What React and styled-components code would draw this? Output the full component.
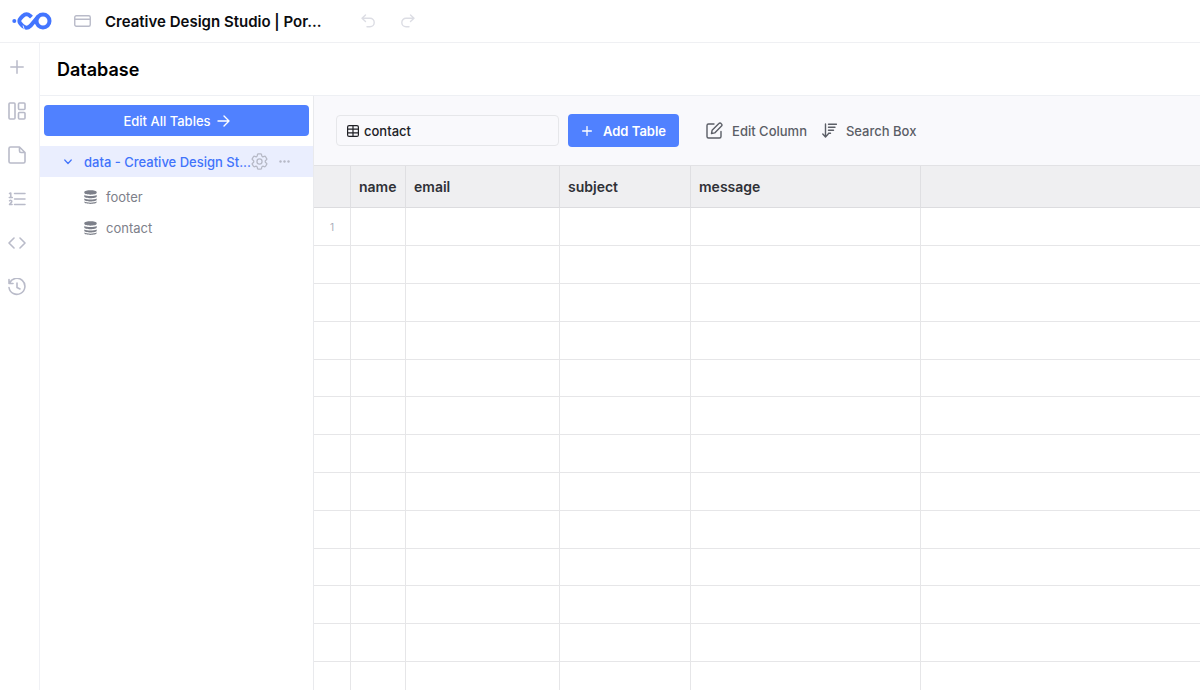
import styled, { createGlobalStyle } from "styled-components";

const columns = [
    { name: "name", width: 55 },
    { name: "email", width: 154 },
    { name: "subject", width: 131 },
    { name: "message", width: 230 },
];

const tables = ["footer", "contact"];
const rows = Array.from({ length: 13 }, (_, i) => i + 1);

const LogoIcon = () => (
    <svg width="40" height="20" viewBox="0 0 40 20" fill="none" stroke="#4375ff" strokeWidth="4">
        <circle cx="2.300" cy="10" r="2" fill="#4375ff" stroke="none" />
        <path d="M19.500 6.200L18.300 5C15.800 2.700 13 2.900 10.800 5L8.300 7.700a3.300 3.300 0 0 0 0 4.600L10.800 15c2.300 2.200 5.200 2.200 7.700-.2L26.300 5.500" />
        <circle cx="31" cy="10" r="6.500" />
        <path d="M11 14.500l1.600 5" stroke="#ffffff" strokeWidth="0.900" />
    </svg>
);

const WindowIcon = () => (
    <Icon width="17" height="12" viewBox="0 0 17 12">
        <rect x="0.750" y="0.750" width="15.500" height="10.500" rx="1.500" />
        <path d="M1 4.300h15" />
    </Icon>
);

const UndoIcon = () => (
    <Icon width="14" height="14" viewBox="0 0 14 14">
        <path d="M4.500 1L1 4.300l3.500 3.200M1.200 4.300H9a4.200 4.200 0 0 1 0 8.400H6" />
    </Icon>
);

const RedoIcon = () => (
    <Icon width="14" height="14" viewBox="0 0 14 14">
        <path d="M9.500 1L13 4.300 9.500 7.500M12.800 4.300H5a4.200 4.200 0 0 0 0 8.400h3" />
    </Icon>
);

const PlusIcon = ({ size }) => (
    <Icon width={size} height={size} viewBox="0 0 14 14" $stroke={size < 12 ? 1.8 : 1.5}>
        <path d="M7 .8v12.400M.8 7h12.400" />
    </Icon>
);

const LayoutIcon = () => (
    <Icon width="18" height="18" viewBox="0 0 18 18" $stroke={1.6}>
        <rect x="1" y="1" width="6" height="16" rx="1" />
        <rect x="10.500" y="1" width="6.500" height="6.500" rx="1" />
        <rect x="10.500" y="10.500" width="6.500" height="6.500" rx="1" />
    </Icon>
);

const PageIcon = () => (
    <Icon width="18" height="18" viewBox="0 0 18 18" $stroke={1.6}>
        <path d="M11.500 1H2.500A1.500 1.500 0 0 0 1 2.500v13A1.500 1.500 0 0 0 2.500 17h13a1.500 1.500 0 0 0 1.500-1.500V6.500zV5a1.500 1.500 0 0 0 1.500 1.500H17" />
    </Icon>
);

const ListIcon = () => (
    <Icon width="18" height="18" viewBox="0 0 18 18" $stroke={1.5}>
        <path d="M6.500 3.500h10.500M6.500 9h10.500M6.500 14.500h10.500" />
        <path d="M1.500 3.500L2.800 3v4.500M1.300 7.500h3M1.500 10.800c1-.8 2.500-.4 2.300.8-.1.900-1.300 1.300-2.300 2.900h2.600" />
    </Icon>
);

const CodeIcon = () => (
    <Icon width="18" height="12" viewBox="0 0 18 12" $stroke={1.6}>
        <path d="M6 1L1 6l5 5M12 1l5 5-5 5" />
    </Icon>
);

const HistoryIcon = () => (
    <Icon width="18" height="18" viewBox="0 0 18 18" $stroke={1.6}>
        <path d="M1 1.500v4h4M1.500 5.300A8 8 0 1 1 1 9.500M9 5v4.500l3 1.500" />
    </Icon>
);

const ArrowIcon = () => (
    <Icon width="13" height="12" viewBox="0 0 13 12">
        <path d="M1 6h11M7 1l5 5-5 5" />
    </Icon>
);

const ChevronIcon = () => (
    <Icon width="8" height="6" viewBox="0 0 8 6" $stroke={1.2}>
        <path d="M0.750 1L4 4.500 7.250 1" />
    </Icon>
);

const GearIcon = () => (
    <Icon width="17" height="17" viewBox="2 2 20 20" $stroke={1.5}>
        <path d="M9.594 3.940c.09-.542.560-.940 1.110-.940h2.593c.55 0 1.020.398 1.110.940l.213 1.281c.063.374.313.686.645.870.074.040.147.083.220.127.325.196.720.257 1.075.124l1.217-.456a1.125 1.125 0 0 1 1.370.490l1.296 2.247a1.125 1.125 0 0 1-.260 1.431l-1.003.827c-.293.241-.438.613-.430.992a7.723 7.723 0 0 1 0 .255c-.008.378.137.750.430.991l1.004.827c.424.350.534.955.260 1.430l-1.298 2.247a1.125 1.125 0 0 1-1.369.491l-1.217-.456c-.355-.133-.750-.072-1.076.124a6.470 6.470 0 0 1-.220.128c-.331.183-.581.495-.644.869l-.213 1.281c-.09.543-.560.940-1.110.940h-2.594c-.55 0-1.019-.398-1.110-.940l-.213-1.281c-.062-.374-.312-.686-.644-.870a6.520 6.520 0 0 1-.220-.127c-.325-.196-.720-.257-1.076-.124l-1.217.456a1.125 1.125 0 0 1-1.369-.490l-1.297-2.247a1.125 1.125 0 0 1 .260-1.431l1.004-.827c.292-.240.437-.613.430-.991a6.932 6.932 0 0 1 0-.255c.007-.380-.138-.751-.430-.992l-1.004-.827a1.125 1.125 0 0 1-.260-1.430l1.297-2.247a1.125 1.125 0 0 1 1.370-.491l1.216.456c.356.133.751.072 1.076-.124.072-.044.146-.086.220-.128.332-.183.582-.495.644-.869z" />
        <circle cx="12" cy="12" r="3" />
    </Icon>
);

const DotsIcon = () => (
    <svg width="11" height="3" viewBox="0 0 11 3" fill="#b6b9c6">
        <circle cx="1.500" cy="1.500" r="1.200" />
        <circle cx="5.500" cy="1.500" r="1.200" />
        <circle cx="9.500" cy="1.500" r="1.200" />
    </svg>
);

const DatabaseIcon = () => (
    <svg width="13" height="14" viewBox="0 0 13 14" fill="#7d808a">
        <path d="M.3 2.200C.3-.4 12.700-.4 12.700 2.200v.6c0 2.500-12.400 2.500-12.400 0z" />
        <path d="M.3 5c2.500 1.400 9.900 1.400 12.400 0v1.500c0 2.300-12.400 2.300-12.400 0z" />
        <path d="M.3 8.400c2.500 1.500 9.900 1.500 12.400 0v1.300c0 2.300-12.400 2.300-12.400 0z" />
        <path d="M.3 11.500c2.500 1.500 9.900 1.500 12.400 0v.5c0 2.500-12.400 2.500-12.400 0z" />
    </svg>
);

const GridIcon = () => (
    <Icon width="12" height="12" viewBox="0 0 12 12" $stroke={1.2}>
        <rect x="0.600" y="0.600" width="10.800" height="10.800" rx="1.500" />
        <path d="M1 4.200h10M1 7.800h10M6 1v10" />
    </Icon>
);

const EditIcon = () => (
    <Icon width="17" height="17" viewBox="0 0 17 17">
        <path d="M8 2H2.500A1.500 1.500 0 0 0 1 3.500v11A1.500 1.500 0 0 0 2.500 16h11a1.500 1.500 0 0 0 1.500-1.500V9.500" />
        <path d="M5.500 11.500l.6-3.200 6.800-6.800a1.500 1.500 0 0 1 2.200 0l.4.4a1.500 1.500 0 0 1 0 2.200L8.700 10.900z" />
    </Icon>
);

const SortIcon = () => (
    <Icon width="15" height="15" viewBox="0 0 15 15">
        <path d="M3.500 1v12.800M.8 11l2.700 2.900L6.200 11M6.500 1.200H14.500M6.500 4.200h6.500M6.500 7.200h5M6.500 10.200h2" />
    </Icon>
);

function Sidebar() {
    return (
        <Rail>
            <RailButton aria-label="Add"><PlusIcon size={14} /></RailButton>
            <RailButton aria-label="Layout"><LayoutIcon /></RailButton>
            <RailButton aria-label="Pages"><PageIcon /></RailButton>
            <RailButton aria-label="Lists"><ListIcon /></RailButton>
            <RailButton aria-label="Code"><CodeIcon /></RailButton>
            <RailButton aria-label="History"><HistoryIcon /></RailButton>
        </Rail>
    )
}

function TableList() {
    return (
        <Panel>
            <EditAll>Edit All Tables <ArrowIcon /></EditAll>
            <GroupRow>
                <GroupButton aria-expanded="true">
                    <ChevronIcon />
                    <span>data - Creative Design St...</span>
                </GroupButton>
                <GroupActions>
                    <IconButton aria-label="Settings"><GearIcon /></IconButton>
                    <IconButton aria-label="More"><DotsIcon /></IconButton>
                </GroupActions>
            </GroupRow>
            <List>
                {tables.map((name) => (
                    <li key={name}>
                        <TableLink href={`#${name}`}><DatabaseIcon />{name}</TableLink>
                    </li>
                ))}
            </List>
        </Panel>
    )
}

function DataTable() {
    return (
        <Grid>
            <colgroup>
                <Col $width={37} />
                {columns.map((col) => <Col key={col.name} $width={col.width} />)}
                <col />
            </colgroup>
            <thead>
                <tr>
                    <HeadCell />
                    {columns.map((col) => <HeadCell key={col.name} scope="col">{col.name}</HeadCell>)}
                    <HeadCell />
                </tr>
            </thead>
            <tbody>
                {rows.map((row) => (
                    <Row key={row}>
                        <NumberCell>{row === 1 ? row : null}</NumberCell>
                        {columns.map((col) => <Cell key={col.name} />)}
                        <Cell />
                    </Row>
                ))}
            </tbody>
        </Grid>
    )
}

function App() {
    return (
        <Page>
            <GlobalStyle />
            <Header>
                <LogoLink href="#home" aria-label="Home"><LogoIcon /></LogoLink>
                <Project><WindowIcon /><span>Creative Design Studio | Por...</span></Project>
                <HistoryButtons>
                    <IconButton aria-label="Undo" $color="#dcdde4"><UndoIcon /></IconButton>
                    <IconButton aria-label="Redo" $color="#dcdde4"><RedoIcon /></IconButton>
                </HistoryButtons>
            </Header>
            <Body>
                <Sidebar />
                <Main>
                    <Title>Database</Title>
                    <Content>
                        <TableList />
                        <Workspace>
                            <Toolbar>
                                <TableName>
                                    <GridIcon />
                                    <input aria-label="Table name" defaultValue="contact" />
                                </TableName>
                                <AddButton><PlusIcon size={10} />Add Table</AddButton>
                                <Tools>
                                    <ToolButton><EditIcon />Edit Column</ToolButton>
                                    <ToolButton><SortIcon />Search Box</ToolButton>
                                </Tools>
                            </Toolbar>
                            <DataTable />
                        </Workspace>
                    </Content>
                </Main>
            </Body>
        </Page>
    )
}

export default App;

const GlobalStyle = createGlobalStyle`
    * {
        box-sizing: border-box;
    }
    body {
        margin: 0;
        background-color: #ffffff;
        color: #0b0c0f;
        font-family: Inter, sans-serif;
        font-size: 13px;
    }
    button, input {
        font: inherit;
        color: inherit;
        border: 0;
        padding: 0;
        background: none;
    }
    button {
        cursor: pointer;
    }
`;

const Icon = styled.svg`
    flex: none;
    fill: none;
    stroke: currentColor;
    stroke-width: ${props => props.$stroke || 1.4};
    stroke-linecap: round;
    stroke-linejoin: round;
`;

const Page = styled.div`
    height: 100vh;
    display: flex;
    flex-direction: column;
    overflow: hidden;
`;

const Header = styled.header`
    height: 43px;
    flex: none;
    display: flex;
    align-items: center;
    padding: 0 12px;
    border-bottom: 1px solid #eff0f3;
`;

const LogoLink = styled.a`
    display: flex;
`;

const Project = styled.div`
    display: flex;
    align-items: center;
    gap: 14px;
    margin-left: 22px;
    font-size: 15px;
    font-weight: 600;
    color: #0b0c0f;
    white-space: nowrap;
    & svg {
        color: #b9bbc9;
    }
`;

const HistoryButtons = styled.div`
    display: flex;
    gap: 26px;
    margin-left: 39px;
`;

const IconButton = styled.button`
    display: flex;
    align-items: center;
    color: ${props => props.$color || "#b6b9c6"};
`;

const Body = styled.div`
    flex: 1;
    min-height: 0;
    display: flex;
`;

const Rail = styled.nav`
    width: 40px;
    flex: none;
    display: flex;
    flex-direction: column;
    gap: 20px;
    padding: 12px 6px 0 0;
    border-right: 1px solid #f0f1f5;
`;

const RailButton = styled.button`
    height: 24px;
    display: flex;
    align-items: center;
    justify-content: center;
    color: #b9bbc9;
`;

const Main = styled.main`
    flex: 1;
    min-width: 0;
    display: flex;
    flex-direction: column;
`;

const Title = styled.h1`
    height: 53px;
    flex: none;
    display: flex;
    align-items: center;
    margin: 0;
    padding: 0 17px;
    font-size: 18px;
    font-weight: 600;
    color: #000000;
    border-bottom: 1px solid #eef0f4;
`;

const Content = styled.div`
    flex: 1;
    min-height: 0;
    display: flex;
`;

const Panel = styled.aside`
    width: 274px;
    flex: none;
    border-right: 1px solid #e9eaed;
`;

const EditAll = styled.button`
    width: calc(100% - 8px);
    height: 31px;
    display: flex;
    align-items: center;
    justify-content: center;
    gap: 6px;
    margin: 9px 4px 10px;
    border-radius: 4px;
    background-color: #5081ff;
    color: #ffffff;
    font-weight: 500;
`;

const GroupRow = styled.div`
    height: 31px;
    display: flex;
    align-items: center;
    justify-content: space-between;
    padding: 0 23px 0 24px;
    background-color: #eaeefe;
`;

const GroupButton = styled.button`
    display: flex;
    align-items: center;
    gap: 12px;
    color: #4173fb;
    font-weight: 500;
    white-space: nowrap;
`;

const GroupActions = styled.div`
    display: flex;
    gap: 11px;
`;

const List = styled.ul`
    margin: 0;
    padding: 4px 0;
    list-style: none;
`;

const TableLink = styled.a`
    height: 31px;
    display: flex;
    align-items: center;
    gap: 9px;
    padding-left: 44px;
    color: #7d808a;
    text-decoration: none;
`;

const Workspace = styled.section`
    flex: 1;
    min-width: 0;
    overflow: hidden;
`;

const Toolbar = styled.div`
    height: 70px;
    display: flex;
    align-items: center;
    padding: 0 22px;
    background-color: #f9f9fc;
    border-bottom: 1px solid #e2e2e5;
`;

const TableName = styled.label`
    width: 223px;
    height: 31px;
    display: flex;
    align-items: center;
    gap: 5px;
    padding: 0 10px;
    border: 1px solid #e6e7ea;
    border-radius: 4px;
    color: #202126;
    font-weight: 500;
    & input {
        flex: 1;
        min-width: 0;
        outline: none;
    }
`;

const AddButton = styled.button`
    height: 33px;
    display: flex;
    align-items: center;
    gap: 11px;
    margin-left: 9px;
    padding: 0 13px 0 14px;
    border-radius: 4px;
    background-color: #5081ff;
    color: #ffffff;
    font-weight: 600;
`;

const Tools = styled.div`
    display: flex;
    gap: 15px;
    margin-left: 27px;
`;

const ToolButton = styled.button`
    display: flex;
    align-items: center;
    gap: 9px;
    color: #5b5e66;
    font-weight: 500;
`;

const Grid = styled.table`
    width: 100%;
    table-layout: fixed;
    border-collapse: separate;
    border-spacing: 0;
`;

const Col = styled.col`
    width: ${props => props.$width}px;
`;

const HeadCell = styled.th`
    height: 42px;
    padding: 0 8px;
    text-align: left;
    font-size: 14px;
    font-weight: 600;
    color: #2f3137;
    background-color: #efeff1;
    border-right: 1px solid #dfdfe2;
    border-bottom: 1px solid #dcdcdf;
    &:last-child {
        border-right: 0;
    }
`;

const Row = styled.tr`
    height: 38px;
    &:nth-child(5n) {
        height: 37px;
    }
`;

const Cell = styled.td`
    padding: 0;
    border-right: 1px solid #e6e6e8;
    border-bottom: 1px solid #e6e6e8;
    &:last-child {
        border-right: 0;
    }
`;

const NumberCell = styled(Cell)`
    text-align: center;
    font-size: 10px;
    color: #a9abb8;
`;
